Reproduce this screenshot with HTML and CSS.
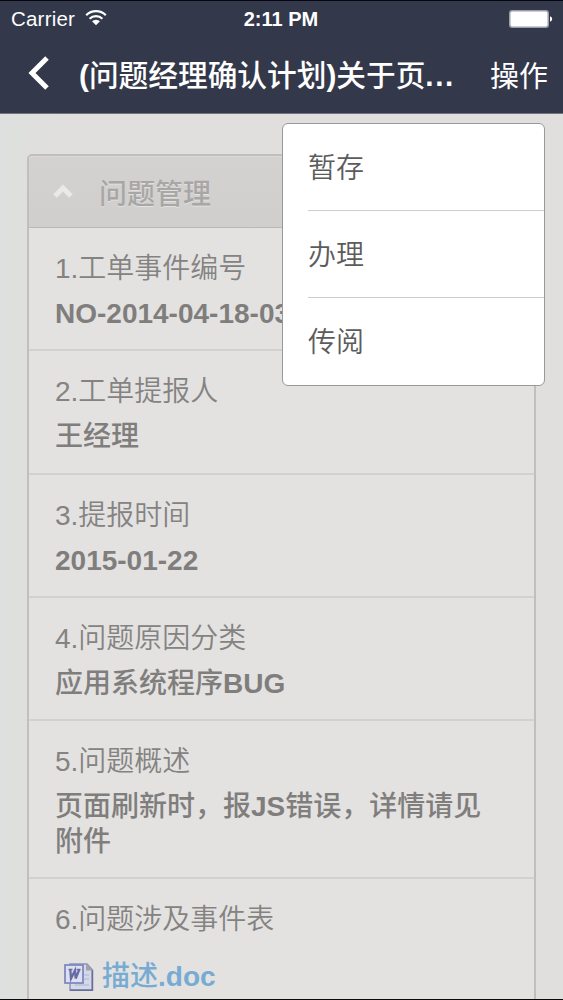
FILE: index.html
```html
<!DOCTYPE html>
<html lang="zh-CN">
<head>
<meta charset="UTF-8" />
<meta name="viewport" content="width=device-width, initial-scale=1" />
<title>问题管理</title>
<link rel="stylesheet" href="styles.css">
</head>
<body>
<div class="phone">
  <header class="header">
    <div class="status-bar">
      <div class="carrier">
        <span>Carrier</span>
        <svg class="wifi" viewBox="0 0 22 17" width="22" height="17">
          <path d="M1.2 6.2a13.8 13.8 0 0 1 19.6 0M4.6 9.7a9 9 0 0 1 12.8 0" fill="none" stroke="#fff" stroke-width="2.2" />
          <path d="M7 12.3a5.7 5.7 0 0 1 8 0L11 16.3z" fill="#fff" />
        </svg>
      </div>
      <div class="time">2:11 PM</div>
      <svg class="battery" viewBox="0 0 44 18" width="44" height="18">
        <rect x="0.75" y="0.75" width="38.5" height="16.5" rx="2.5" fill="#fff" stroke="#9b9ea8" stroke-width="1.5" />
        <path d="M41 6.2q2.2.6 2.2 2.8T41 11.8z" fill="#fff" />
      </svg>
    </div>
    <div class="nav-bar">
      <a class="back" href="#" aria-label="返回">
        <svg viewBox="0 0 22 34" width="22" height="34">
          <path d="M19 2L4 17l15 15" fill="none" stroke="#fff" stroke-width="5" />
        </svg>
      </a>
      <h1 class="title"><b>(</b>问题经理确认计划<b>)</b>关于页<b class="dots">...</b></h1>
      <a class="action" href="#">操作</a>
    </div>
  </header>

  <main class="content">
    <section class="panel">
      <h2 class="panel-header">
        <svg class="chevron" viewBox="0 0 22 16" width="22" height="16">
          <path d="M3 13l8-8 8 8" fill="none" stroke="#e9e9e8" stroke-width="5" />
        </svg>
        <span>问题管理</span>
      </h2>
      <div class="row">
        <div class="label">1.工单事件编号</div>
        <div class="value"><b>NO-2014-04-18-03</b></div>
      </div>
      <div class="row">
        <div class="label">2.工单提报人</div>
        <div class="value">王经理</div>
      </div>
      <div class="row">
        <div class="label">3.提报时间</div>
        <div class="value"><b>2015-01-22</b></div>
      </div>
      <div class="row">
        <div class="label">4.问题原因分类</div>
        <div class="value">应用系统程序<b>BUG</b></div>
      </div>
      <div class="row">
        <div class="label">5.问题概述</div>
        <div class="value">页面刷新时，报<b>JS</b>错误，详情请见附件</div>
      </div>
      <div class="row">
        <div class="label">6.问题涉及事件表</div>
        <a class="value attachment" href="#">
          <svg class="doc-icon" viewBox="0 0 30 28" width="30" height="28">
            <path d="M6 1h17l5.5 6v20H6z" fill="#d3d9e8" stroke="#8992b5" stroke-width="1.4" />
            <path d="M28.3 7v20.2H6" fill="none" stroke="#696f98" stroke-width="1.6" />
            <path d="M22 1v6.5h6.5z" fill="#a2a2ab" />
            <path d="M20 12h5M20 16h5M11 22h14" stroke="#a9b5d3" stroke-width="1.2" />
            <rect x="1" y="2" width="18" height="18" fill="#dce0f0" stroke="#8189bd" stroke-width="1.8" />
            <path d="M4.5 6.5h4M12.5 6.5h4" stroke="#686ca5" stroke-width="1.4" />
            <path d="M6.3 6.5l.7 9 4-8 .7 8 3.6-9" fill="none" stroke="#686ca5" stroke-width="2.3" />
          </svg>
          <span>描述<b>.doc</b></span>
        </a>
      </div>
    </section>
  </main>

  <ul class="menu">
    <li class="menu-item">暂存</li>
    <li class="menu-item">办理</li>
    <li class="menu-item">传阅</li>
  </ul>
</div>
</body>
</html>
```
FILE: styles.css
```css
* {
  box-sizing: border-box;
}
body {
  margin: 0;
  font-family: "Liberation Sans", "Noto Sans CJK SC", sans-serif;
  font-size: 28px;
  overflow: hidden;
}
a {
  color: inherit;
  text-decoration: none;
}
.phone {
  position: relative;
  display: flex;
  flex-direction: column;
  height: 1000px;
  overflow: hidden;
  background: linear-gradient(to right, #dde0de, #e0dfde 60px);
  border-top: 1px solid #05060f;
  border-bottom: 1px solid #0a0a0c;
}
.header {
  flex: none;
  height: 113px;
  background: #33384a;
  border-bottom: 1px solid #73737f;
  color: #fff;
}
.status-bar {
  display: grid;
  grid-template-columns: 1fr auto 1fr;
  align-items: center;
  height: 36px;
  padding: 0 10px 0 11px;
  font-size: 20.5px;
}
.carrier {
  display: flex;
  align-items: center;
  gap: 10px;
  letter-spacing: 0.2px;
}
.wifi {
  margin-bottom: 3px;
}
.time {
  margin-right: 2px;
  font-weight: bold;
  font-size: 20px;
}
.battery {
  justify-self: end;
}
.nav-bar {
  display: flex;
  align-items: center;
  height: 74px;
  padding: 0 15px 0 28px;
}
.back {
  display: flex;
  width: 51px;
  margin-top: -2px;
}
.title {
  flex: 1;
  margin: 3px 0 0;
  font-size: 29.7px;
  font-weight: 500;
  line-height: 40px;
  white-space: nowrap;
}
.title b {
  font-weight: bold;
}
.title .dots {
  letter-spacing: 1.6px;
}
.action {
  font-size: 29px;
}
.content {
  padding: 40px 27px 0;
}
.panel {
  border: 2px solid #c0bfbe;
  border-radius: 5px;
  background: #e3e2e1;
  color: #848382;
}
.panel-header {
  display: flex;
  align-items: center;
  gap: 25px;
  height: 72px;
  margin: 0;
  padding: 0 23px;
  background: linear-gradient(#d3d2d1, #d0cfce);
  border-bottom: 1px solid #b9b8b7;
  border-radius: 3px 3px 0 0;
  box-shadow: inset 0 1px #dad9d8;
  color: #a8a7a6;
  font-size: 28px;
  font-weight: 500;
  text-shadow: 0 1px #e2e1e0;
}
.chevron {
  margin-bottom: 1px;
}
.row {
  padding: 22px 26px 18.3px;
  border-bottom: 2px solid #d2d1d0;
}
.label {
  line-height: 38px;
  font-weight: 350;
}
.value {
  margin-top: 8px;
  line-height: 35px;
  font-weight: 500;
  color: #7f7e7d;
}
.value b {
  font-weight: bold;
}
.attachment {
  display: flex;
  align-items: center;
  gap: 8px;
  padding: 12px 0 0 9px;
  color: #77abd2;
}
.doc-icon {
  margin-top: 1px;
}

/* action menu */
.menu {
  position: absolute;
  top: 122px;
  right: 18px;
  width: 263px;
  margin: 0;
  padding: 0 0 0 25px;
  list-style: none;
  background: #fff;
  border: 1px solid #999;
  border-radius: 6px;
  color: #5c5c5c;
}
.menu-item {
  display: flex;
  align-items: center;
  height: 87.5px;
  padding-bottom: 2px;
  font-weight: 350;
}
.menu-item:first-child {
  height: 85.5px;
}
.menu-item + .menu-item {
  border-top: 1px solid #cdcdcd;
}
```
